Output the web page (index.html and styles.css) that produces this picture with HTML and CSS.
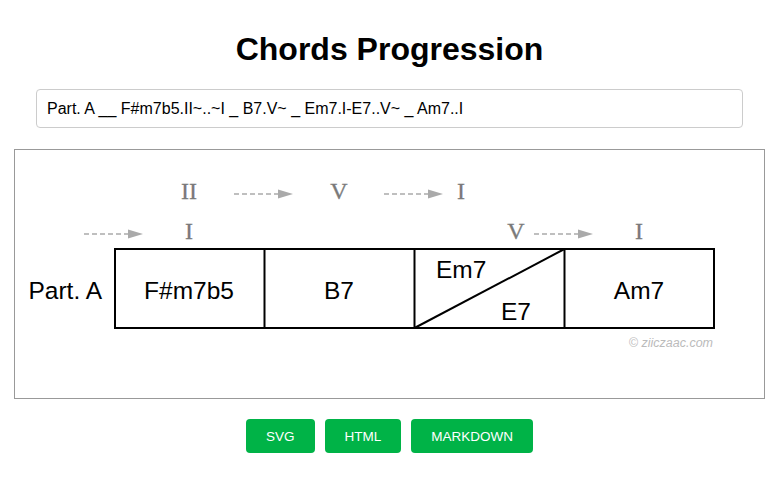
FILE: index.html
```html
<!DOCTYPE html>
<html lang="en">
<head>
    <meta charset="UTF-8">
    <title>Chords Progression</title>
    <link rel="stylesheet" href="styles.css">
</head>
<body>
    <h1 class="titulo">Chords Progression</h1>

    <div class="entrada">
        <input type="text" id="progressao" value="Part. A __ F#m7b5.II~..~I _ B7.V~ _ Em7.I-E7..V~ _ Am7..I">
    </div>

    <div class="quadro">
        <svg class="diagrama" width="747" height="248" viewBox="0 0 747 248">
            <defs>
                <g id="seta">
                    <line x1="0" y1="0" x2="44" y2="0" stroke="#aaa" stroke-width="1.5" stroke-dasharray="5,3"/>
                    <polygon points="44,-4.5 59,0 44,4.5" fill="#aaa"/>
                </g>
            </defs>

            <!-- graus -->
            <g class="graus">
                <text x="174" y="49">II</text>
                <text x="324" y="49">V</text>
                <text x="446" y="49">I</text>
                <text x="174" y="89">I</text>
                <text x="501" y="89">V</text>
                <text x="624" y="89">I</text>
            </g>
            <use href="#seta" x="219" y="44"/>
            <use href="#seta" x="369" y="44"/>
            <use href="#seta" x="69" y="84"/>
            <use href="#seta" x="519" y="84"/>

            <!-- compassos -->
            <g fill="none" stroke="#000" stroke-width="2">
                <rect x="100" y="99" width="599" height="79"/>
                <line x1="249.5" y1="99" x2="249.5" y2="178"/>
                <line x1="399.5" y1="99" x2="399.5" y2="178"/>
                <line x1="549.5" y1="99" x2="549.5" y2="178"/>
                <line x1="399.5" y1="178" x2="549.5" y2="99"/>
            </g>

            <g class="acordes">
                <text x="87" y="149" text-anchor="end">Part. A</text>
                <text x="174" y="149" text-anchor="middle">F#m7b5</text>
                <text x="324" y="149" text-anchor="middle">B7</text>
                <text x="421" y="128">Em7</text>
                <text x="486" y="170">E7</text>
                <text x="624" y="149" text-anchor="middle">Am7</text>
            </g>

            <text class="marca" x="698" y="197" text-anchor="end">© ziiczaac.com</text>
        </svg>
    </div>

    <div class="botoes">
        <button type="button" class="botao">SVG</button>
        <button type="button" class="botao">HTML</button>
        <button type="button" class="botao">MARKDOWN</button>
    </div>
</body>
</html>
```

FILE: styles.css
```css
body {
    font-family: "Liberation Sans", Arial, sans-serif;
    margin: 0;
    padding: 0 14px;
}
.titulo {
    font-size: 32px;
    text-align: center;
    margin: 31px 0 0;
    line-height: 37px;
}
.entrada {
    margin: 21px 22px 0;
}
.entrada input {
    display: block;
    width: 100%;
    box-sizing: border-box;
    height: 39px;
    padding: 0 10px;
    font-family: "Liberation Sans", Arial, sans-serif;
    font-size: 16px;
    color: #000;
    border: 1px solid #ccc;
    border-radius: 4px;
}
.quadro {
    margin-top: 21px;
    border: 1px solid #999;
    height: 248px;
}
.diagrama {
    display: block;
}
.graus text {
    font-family: "Liberation Serif", "Times New Roman", serif;
    font-size: 24px;
    fill: #7a7a7a;
    stroke: #7a7a7a;
    stroke-width: 0.3;
    text-anchor: middle;
}
.acordes text {
    font-family: "Liberation Sans", Arial, sans-serif;
    font-size: 24.5px;
    fill: #000;
}
.marca {
    font-family: "Liberation Sans", Arial, sans-serif;
    font-style: italic;
    font-size: 12.5px;
    fill: #bbb;
}
.botoes {
    display: flex;
    justify-content: center;
    gap: 10px;
    margin-top: 20px;
}
.botao {
    height: 34px;
    padding: 0 20px;
    font-family: "Liberation Sans", Arial, sans-serif;
    font-size: 13.5px;
    color: #fff;
    background: #00b347;
    border: none;
    border-radius: 4px;
}
```
